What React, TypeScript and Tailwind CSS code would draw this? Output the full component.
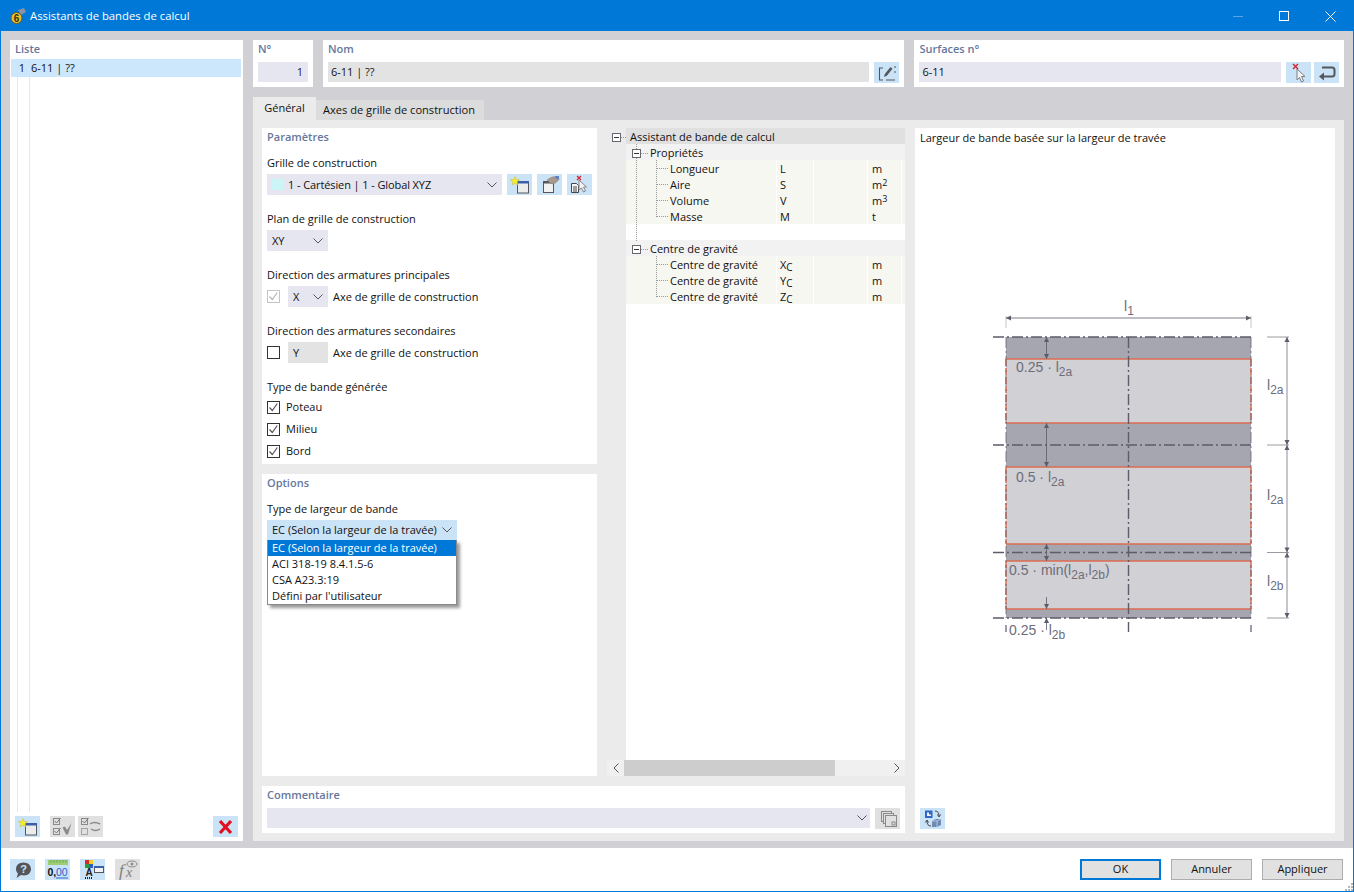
import React from "react";

const NewIcon = () => (
  <svg width="22" height="20" viewBox="0 0 22 20">
    <rect x="8.500" y="6.500" width="11" height="11.500" fill="#ececec" stroke="#55565c" />
    <rect x="8" y="6" width="12" height="2.500" fill="#3d5fa8" />
    <path d="M6 1.500l1.300 3 3.200.2-2.400 2.100.8 3.200L6 8.300 3.100 10l.8-3.200-2.400-2.100 3.200-.2z" fill="#f5ee2c" stroke="#c9b92a" strokeWidth=".5" />
  </svg>
);
const EditWinIcon = () => (
  <svg width="22" height="20" viewBox="0 0 22 20">
    <rect x="4.500" y="6.500" width="10" height="11" fill="#f2f2f2" stroke="#55565c" />
    <rect x="4" y="6" width="11" height="2.500" fill="#55565c" />
    <path d="M8 5l5-3 6-.5 1 3-3 3-3 1.500-3-1z" fill="#a89a8a" stroke="#7d7268" strokeWidth=".5" />
    <path d="M16 1h4v3h-3z" fill="#5d82c7" />
  </svg>
);
const PickDocIcon = () => (
  <svg width="22" height="20" viewBox="0 0 22 20">
    <path d="M2.500 8.500h5l2 2v7h-7z" fill="#f6f6f6" stroke="#44454a" />
    <path d="M4 12h4M4 14h4M4 16h4" stroke="#44454a" />
    <path d="M10 5v10l2.500-2 2 4 2-1-2-4h3z" fill="#f3f3f3" stroke="#85868c" />
    <path d="M8 1l4 4M12 1L8 5" stroke="#d8232e" strokeWidth="1.300" />
  </svg>
);
const PickIcon = () => (
  <svg width="22" height="20" viewBox="0 0 22 20">
    <path d="M9 6v11l2.500-2.500 2 4.500 2-1-2-4.500h3.500z" fill="#f5f5f5" stroke="#7c7d84" />
    <path d="M5 1l5 5M10 1L5 6" stroke="#d8232e" strokeWidth="1.400" />
  </svg>
);
const ReturnIcon = () => (
  <svg width="22" height="20" viewBox="0 0 22 20">
    <path d="M6 4.500h10c1.500 0 2.500 1 2.500 2.500v4c0 1.500-1 2.500-2.500 2.500H7" fill="none" stroke="#55565c" strokeWidth="2" />
    <path d="M8 9.500l-5 4 5 4z" fill="#55565c" />
  </svg>
);
const PencilBoxIcon = () => (
  <svg width="22" height="20" viewBox="0 0 22 20">
    <path d="M7 5H3.500v12H7M10 17h9" fill="none" stroke="#55565c" strokeWidth="1.100" />
    <path d="M8 14l.8-3 5.700-7 2 1.700-5.700 7z" fill="#55565c" />
    <path d="M19 3v2M19 8v2" stroke="#55565c" />
  </svg>
);
const CheckAllIcon = () => (
  <svg width="22" height="20" viewBox="0 0 22 20">
    <rect x="1.500" y="1.500" width="6" height="6" fill="#e0e0e0" stroke="#8a8a8a" />
    <rect x="1.500" y="11.500" width="6" height="6" fill="#e0e0e0" stroke="#8a8a8a" />
    <path d="M2.500 4l2 2 4-5M2.500 14l2 2 4-5" fill="none" stroke="#777" />
    <path d="M10.500 10.500l2.500-1 2 3.500 4.500-7-3.500 11.500h-2z" fill="#8a8a8a" />
  </svg>
);
const CheckSwapIcon = () => (
  <svg width="22" height="20" viewBox="0 0 22 20">
    <rect x="1.500" y="1.500" width="6" height="6" fill="#e0e0e0" stroke="#8a8a8a" />
    <rect x="1.500" y="11.500" width="6" height="6" fill="#e0e0e0" stroke="#a5a5a5" />
    <path d="M2.500 4l2 2 4-5" fill="none" stroke="#777" />
    <path d="M10 7c3-2 6-2 10 0M20 12c-3 2-6 2-9 0" fill="none" stroke="#8a8a8a" strokeWidth="1.500" />
  </svg>
);
const XIcon = () => (
  <svg width="22" height="20" viewBox="0 0 22 20">
    <path d="M5 4l11 12M16 4L5 16" stroke="#e01020" strokeWidth="3.200" />
  </svg>
);
const HelpIcon = () => (
  <svg width="22" height="20" viewBox="0 0 22 20">
    <path d="M11.500 2.500c4.500 0 7.500 2.800 7.500 6.500s-3 6.500-7 6.500c-1 0-2-.2-3-.5l-4.500 3 1.500-4.500C4.500 12 4 10.500 4 9c0-3.700 3-6.500 7.500-6.500z" fill="#55565c" />
    <text x="11.500" y="13" textAnchor="middle" fontSize="11" fontWeight="700" fill="#cbe3f7" fontFamily="Liberation Sans, sans-serif">?</text>
  </svg>
);
const UnitsIcon = () => (
  <svg width="24" height="21" viewBox="0 0 24 21">
    <rect x="2" y="1" width="20" height="5" fill="#9ccf73" />
    <path d="M5 1v2.500M8 1v2.500M11 1v2.500M14 1v2.500M17 1v2.500M20 1v2.500" stroke="#6ea04c" />
    <text x="1.500" y="17" fontSize="10.500" fontWeight="700" fill="#111" fontFamily="Liberation Sans, sans-serif">0,</text>
    <text x="10" y="17" fontSize="10.500" fill="#2a62c9" fontFamily="Liberation Sans, sans-serif">00</text>
    <path d="M10 19h12" stroke="#2a62c9" />
  </svg>
);
const ColorsIcon = () => (
  <svg width="24" height="21" viewBox="0 0 24 21">
    <rect x="4" y="1" width="4" height="4" fill="#d62a2a" />
    <rect x="8" y="1" width="4" height="4" fill="#f0d020" />
    <rect x="4" y="5" width="4" height="4" fill="#2d9a3c" />
    <rect x="8" y="5" width="4" height="4" fill="#2a62c9" />
    <text x="4.500" y="17" fontSize="10" fontWeight="700" fill="#222" fontFamily="Liberation Sans, sans-serif">A</text>
    <path d="M4 19h1M6 19h1M8 19h1M10 19h1" stroke="#222" strokeWidth="2" />
    <rect x="13.500" y="7.500" width="9" height="6" fill="#f2f2f2" stroke="#55565c" />
    <rect x="13" y="7" width="10" height="2" fill="#3d5fa8" />
  </svg>
);
const FxIcon = () => (
  <svg width="24" height="21" viewBox="0 0 24 21">
    <text x="3" y="17" fontSize="17" fontStyle="italic" fill="#7e7e7e" fontFamily="Liberation Serif, serif">f</text>
    <text x="10" y="18" fontSize="14" fontStyle="italic" fill="#7e7e7e" fontFamily="Liberation Serif, serif">x</text>
    <ellipse cx="16" cy="5" rx="5" ry="3" fill="none" stroke="#8e8e8e" />
    <circle cx="16" cy="5" r="1.500" fill="#8e8e8e" />
  </svg>
);
const CopyIcon = () => (
  <svg width="22" height="20" viewBox="0 0 22 20">
    <rect x="4.500" y="2.500" width="10" height="10" fill="none" stroke="#8a8a8a" />
    <rect x="6.500" y="4.500" width="10" height="10" fill="#e0e0e0" stroke="#8a8a8a" />
    <rect x="8.500" y="6.500" width="11" height="11" fill="#e0e0e0" stroke="#8a8a8a" />
    <rect x="15" y="13" width="3" height="3" fill="none" stroke="#8a8a8a" />
  </svg>
);
const SyncIcon = () => (
  <svg width="22" height="20" viewBox="0 0 22 20">
    <rect x="3" y="1.500" width="7.500" height="7.500" fill="#2f66c8" />
    <path d="M5 3.500v3.500h4V5.500H7v-2z" fill="#f4f4f4" />
    <path d="M13 2c3 0 4 2 4 5M15.500 5.500L17 8l1.700-2.500M9 17c-3 0-4-2-4-5M3.300 13.500L5 11l1.500 2.500" fill="none" stroke="#44454a" />
    <path d="M10 12l4-2h5v6l-4 2h-5z" fill="#6f8bb5" />
    <path d="M10 12h5v6M15 12l4-2" fill="none" stroke="#dce8f5" strokeWidth=".6" />
  </svg>
);

const Chevron = ({ className = "" }: { className?: string }) => (
  <svg width="10" height="6" viewBox="0 0 10 6" className={className}>
    <path d="M.5.5L5 5 9.500.5" fill="none" stroke="#55565c" />
  </svg>
);

const IconBtn = ({ children, gray = false }: { children: React.ReactNode; gray?: boolean }) => (
  <div className={`flex h-[21px] w-[25px] shrink-0 items-center justify-center overflow-hidden ${gray ? "bg-[#e0e0e0]" : "bg-[#cbe3f7]"}`}>
    {children}
  </div>
);

const Heading = ({ children }: { children: React.ReactNode }) => (
  <div className="h-[18px] text-[11px] font-semibold leading-[18px] text-[#67779c]">{children}</div>
);

const Label = ({ children }: { children: React.ReactNode }) => (
  <div className="h-[16px] leading-[16px]">{children}</div>
);

const Combo = ({ text, className = "" }: { text: string; className?: string }) => (
  <div className={`flex h-[21px] items-center justify-between bg-[#e6e6f0] pl-[5px] pr-[5px] ${className}`}>
    <span className="pt-px">{text}</span>
    <Chevron />
  </div>
);

const Check = ({ checked = false, disabled = false }: { checked?: boolean; disabled?: boolean }) => (
  <div className={`flex h-[13px] w-[13px] shrink-0 items-center justify-center border bg-white ${disabled ? "border-[#c4c4c4]" : "border-[#333333]"}`}>
    {checked && (
      <svg width="11" height="11" viewBox="0 0 11 11">
        <path d="M1.500 5.500l2.800 3 5-7" fill="none" stroke={disabled ? "#b5b5b5" : "#555"} strokeWidth="1.200" />
      </svg>
    )}
  </div>
);

const Section = ({ label, children }: { label: string; children: React.ReactNode }) => (
  <div className="flex h-[56px] flex-col gap-[3px]">
    <Label>{label}</Label>
    {children}
  </div>
);

const Sub = ({ a, b }: { a: string; b: string }) => (
  <span>
    {a}
    <span className="relative top-[2px] text-[10px]">{b}</span>
  </span>
);

const Row = ({ name, sym, unit, sup }: { name: string; sym: React.ReactNode; unit: string; sup?: string }) => (
  <div className="relative flex h-[16px] bg-[#f7f7f2] leading-[18px]">
    <div className="absolute left-[31px] top-[8px] w-[11px] border-t border-dotted border-[#999]" />
    <div className="w-[151px] border-r border-white pl-[44px]">{name}</div>
    <div className="w-[37px] border-r border-white pl-[3px]">{sym}</div>
    <div className="w-[54px] border-r border-white" />
    <div className="w-[34px] border-r border-white pl-[4px]">
      {unit}
      {sup && <sup className="top-[-3px] text-[9px]">{sup}</sup>}
    </div>
  </div>
);

const TreeMinus = () => (
  <svg width="9" height="9" viewBox="0 0 9 9" className="block shrink-0">
    <rect x=".5" y=".5" width="8" height="8" fill="#fff" stroke="#66666e" />
    <path d="M2 4.500h5" stroke="#333" />
  </svg>
);

const Diagram = () => {
  const ink = "#5c5c6a";
  const txt = "#6d6d7a";
  const red = "#dc6c50";
  const fam = "Liberation Sans, sans-serif";
  const axis = "11 3 2 3";
  const arrowV = (x: number, y: number, up: boolean) => (
    <path d={up ? `M${x - 2.500} ${y + 5}L${x} ${y}L${x + 2.500} ${y + 5}z` : `M${x - 2.500} ${y - 5}L${x} ${y}L${x + 2.500} ${y - 5}z`} fill={ink} />
  );
  const label = (x: number, y: number, a: string, b: string) => (
    <text x={x} y={y} fontSize="14" fill={txt} fontFamily={fam}>
      {a}
      <tspan dy="4" fontSize="12">{b}</tspan>
    </text>
  );
  return (
    <svg width="420" height="360" viewBox="915 290 420 360" className="block">
      <rect x="1006" y="337" width="245" height="281" fill="#a6a6b0" />
      <rect x="1006" y="359" width="245" height="64" fill="#d1d0d5" />
      <rect x="1006" y="467" width="245" height="77" fill="#d1d0d5" />
      <rect x="1006" y="561" width="245" height="48" fill="#d1d0d5" />
      <path d="M1006 359h245M1006 423h245M1006 467h245M1006 544h245M1006 561h245M1006 609h245" stroke={red} strokeWidth="1.300" />
      <path d="M1006 359V423M1251 359V423M1006 467V544M1251 467V544M1006 561V609M1251 561V609" stroke={red} strokeWidth="1.500" strokeDasharray="7 2" />
      <path d="M1006 337V618M1251 337V618" stroke={ink} strokeWidth="1" strokeDasharray="11 3 2 3" opacity=".75" />
      <path d="M993 337H1251M993 445H1251M993 552.500H1251M993 618H1251" stroke={ink} strokeWidth="1.400" strokeDasharray={axis} />
      <path d="M1128.500 337V632" stroke={ink} strokeWidth="1.400" strokeDasharray={axis} />
      <path d="M1006 625V632M1251 625V632" stroke={ink} strokeWidth="1.200" />
      <path d="M1006 316V328M1251 316V328" stroke="#c6c6c6" strokeWidth="1" />
      <path d="M1006 318H1251" stroke={ink} strokeWidth=".8" />
      <path d="M1006 318l5-2.500v5zM1251 318l-5-2.500v5z" fill={ink} />
      <path d="M1267 337h22M1267 445h22M1267 552.500h22M1267 618h22" stroke="#9a9aa4" />
      <path d="M1287 337V618" stroke="#8c8c98" />
      {arrowV(1287, 337, true)}
      {arrowV(1287, 445, false)}
      {arrowV(1287, 445, true)}
      {arrowV(1287, 552.500, false)}
      {arrowV(1287, 552.500, true)}
      {arrowV(1287, 618, false)}
      <path d="M1046.500 337V359M1046.500 423V467M1046.500 544V561M1046.500 597V609M1046.500 618V630" stroke={ink} strokeWidth=".8" />
      {arrowV(1046.500, 337, true)}
      {arrowV(1046.500, 359, false)}
      {arrowV(1046.500, 423, true)}
      {arrowV(1046.500, 467, false)}
      {arrowV(1046.500, 544, true)}
      {arrowV(1046.500, 561, false)}
      {arrowV(1046.500, 609, false)}
      {arrowV(1046.500, 618, true)}
      {label(1124, 311, "l", "1")}
      {label(1016, 372, "0.25 · l", "2a")}
      {label(1016, 482, "0.5 · l", "2a")}
      <text x="1009" y="575" fontSize="14" fill={txt} fontFamily={fam}>
        0.5 · min(l<tspan dy="4" fontSize="12">2a</tspan><tspan dy="-4">,l</tspan><tspan dy="4" fontSize="12">2b</tspan><tspan dy="-4">)</tspan>
      </text>
      {label(1009, 635, "0.25 · l", "2b")}
      {label(1267, 390, "l", "2a")}
      {label(1267, 500, "l", "2a")}
      {label(1267, 586, "l", "2b")}
    </svg>
  );
};

export default function App() {
  return (
    <div className="flex h-[892px] w-[1354px] flex-col overflow-hidden border border-[#0078d7] bg-white text-[11px] text-[#111111] [font-family:'Open_Sans','Noto_Sans',sans-serif]">
      {/* title bar */}
      <div className="flex h-[30px] shrink-0 items-center bg-[#0078d7] text-white">
        <svg width="18" height="18" viewBox="0 0 18 18" className="ml-[8px]">
          <path d="M9 3l6-2 2 4-5 3z" fill="#8b93a8" />
          <circle cx="7.500" cy="11" r="5.500" fill="#e9c22b" stroke="#6a5a20" />
          <text x="7.500" y="14.500" textAnchor="middle" fontSize="10" fontWeight="700" fill="#3a3210" fontFamily="Liberation Sans, sans-serif">6</text>
        </svg>
        <span className="ml-[3px] text-[11.3px]">Assistants de bandes de calcul</span>
        <div className="ml-auto flex items-center">
          <div className="flex w-[46px] justify-center">
            <div className="h-px w-[10px] bg-[#5aa5e4]" />
          </div>
          <div className="flex w-[46px] justify-center">
            <div className="h-[10px] w-[10px] border border-white" />
          </div>
          <div className="flex w-[46px] justify-center">
            <svg width="11" height="11" viewBox="0 0 11 11">
              <path d="M.5.5l10 10M10.500.5l-10 10" stroke="#fff" />
            </svg>
          </div>
        </div>
      </div>

      {/* body */}
      <div className="flex min-h-0 flex-1 gap-[10px] bg-[#d1d0d5] pb-[7px] pl-[9px] pr-[9px] pt-[9px]">
        {/* list */}
        <div className="flex w-[233px] shrink-0 flex-col bg-white">
          <div className="px-[5px]"><Heading>Liste</Heading></div>
          <div className="relative mx-px flex-1">
            <div className="absolute bottom-[4px] left-[6px] top-0 w-[1px] bg-[#e8e8e8]" />
            <div className="absolute bottom-[4px] left-[18px] top-0 w-[1px] bg-[#e8e8e8]" />
            <div className="relative mt-px flex h-[18px] w-[230px] items-center bg-[#cce6fc]">
              <span className="w-[14px] text-right">1</span>
              <span className="ml-[6px]">6-11 | ??</span>
            </div>
          </div>
          <div className="flex h-[25px] shrink-0 items-start px-[5px]">
            <IconBtn><NewIcon /></IconBtn>
            <div className="ml-[10px]"><IconBtn gray><CheckAllIcon /></IconBtn></div>
            <div className="ml-[3px]"><IconBtn gray><CheckSwapIcon /></IconBtn></div>
            <div className="ml-auto"><IconBtn><XIcon /></IconBtn></div>
          </div>
        </div>

        {/* right */}
        <div className="flex min-w-0 flex-1 flex-col">
          <div className="flex h-[47px] shrink-0 gap-[10px]">
            <div className="w-[60px] bg-white px-[5px]">
              <Heading>N°</Heading>
              <div className="mt-[4px] h-[20px] bg-[#e6e6f0] pr-[5px] text-right leading-[20px] text-[#2a1050]">1</div>
            </div>
            <div className="w-[582px] bg-white px-[5px]">
              <Heading>Nom</Heading>
              <div className="mt-[4px] flex gap-[5px]">
                <div className="h-[20px] flex-1 bg-[#e3e3e3] pl-[3px] leading-[20px]">6-11 | ??</div>
                <IconBtn><PencilBoxIcon /></IconBtn>
              </div>
            </div>
            <div className="w-[430px] bg-white px-[5px]">
              <Heading>Surfaces n°</Heading>
              <div className="mt-[4px] flex">
                <div className="h-[20px] flex-1 bg-[#e6e6f0] pl-[3px] leading-[20px]">6-11</div>
                <div className="ml-[5px]"><IconBtn><PickIcon /></IconBtn></div>
                <div className="ml-[3px]"><IconBtn><ReturnIcon /></IconBtn></div>
              </div>
            </div>
          </div>

          {/* tabs */}
          <div className="mt-[10px] flex h-[23px] shrink-0 items-end">
            <div className="flex h-[23px] w-[63px] items-center justify-center bg-[#ebebeb]">Général</div>
            <div className="flex h-[20px] w-[168px] items-center justify-center bg-[#dcdcdc] pr-[2px] text-[11.1px]">Axes de grille de construction</div>
          </div>

          <div className="flex min-h-0 flex-1 gap-[10px] bg-[#ebebeb] px-[9px] py-[8px]">
            <div className="flex w-[643px] shrink-0 flex-col gap-[10px]">
              <div className="flex min-h-0 flex-1 gap-[10px]">
                {/* left column */}
                <div className="flex w-[335px] shrink-0 flex-col gap-[10px]">
                  <div className="h-[336px] bg-white px-[5px]">
                    <Heading>Paramètres</Heading>
                    <div className="mt-[9px]">
                      <Section label="Grille de construction">
                        <div className="flex gap-[5px]">
                          <div className="flex h-[21px] w-[235px] items-center bg-[#e6e6f0] pl-[5px] pr-[5px]">
                            <div className="h-[11px] w-[11px] bg-[#ccf5f8]" />
                            <span className="ml-[5px] pt-px tracking-[-0.1px]">1 - Cartésien | 1 - Global XYZ</span>
                            <Chevron className="ml-auto" />
                          </div>
                          <IconBtn><NewIcon /></IconBtn>
                          <IconBtn><EditWinIcon /></IconBtn>
                          <IconBtn><PickDocIcon /></IconBtn>
                        </div>
                      </Section>
                      <Section label="Plan de grille de construction">
                        <Combo text="XY" className="w-[61px]" />
                      </Section>
                      <Section label="Direction des armatures principales">
                        <div className="flex items-center">
                          <Check checked disabled />
                          <Combo text="X" className="ml-[8px] w-[40px]" />
                          <span className="ml-[5px] pt-px">Axe de grille de construction</span>
                        </div>
                      </Section>
                      <Section label="Direction des armatures secondaires">
                        <div className="flex items-center">
                          <Check />
                          <div className="ml-[8px] flex h-[21px] w-[40px] items-center bg-[#e3e3e3] pl-[5px] pt-px">Y</div>
                          <span className="ml-[5px] pt-px">Axe de grille de construction</span>
                        </div>
                      </Section>
                      <Label>Type de bande générée</Label>
                      <div className="mt-[1px] flex flex-col">
                        {["Poteau", "Milieu", "Bord"].map((t) => (
                          <div key={t} className="flex h-[22px] items-center gap-[6px]">
                            <Check checked />
                            <span>{t}</span>
                          </div>
                        ))}
                      </div>
                    </div>
                  </div>
                  <div className="relative min-h-0 flex-1 bg-white px-[5px]">
                    <Heading>Options</Heading>
                    <div className="mt-[9px]"><Label>Type de largeur de bande</Label></div>
                    <div className="mt-[3px] flex h-[20px] w-[190px] items-center justify-between bg-[#cbe3f7] px-[5px]">
                      <span className="pt-px">EC (Selon la largeur de la travée)</span>
                      <Chevron />
                    </div>
                    <div className="absolute left-[5px] top-[66px] w-[190px] border border-t-0 border-[#8a8a8a] bg-white shadow-[3px_3px_3px_rgba(0,0,0,0.4)]">
                      <div className="h-[16px] bg-[#0078d7] pl-[4px] leading-[16px] text-white">EC (Selon la largeur de la travée)</div>
                      <div className="h-[16px] pl-[4px] leading-[16px]">ACI 318-19 8.4.1.5-6</div>
                      <div className="h-[16px] pl-[4px] leading-[16px]">CSA A23.3:19</div>
                      <div className="h-[16px] pl-[4px] leading-[16px]">Défini par l'utilisateur</div>
                    </div>
                  </div>
                </div>

                {/* tree */}
                <div className="flex min-w-0 flex-1 flex-col">
                  <div className="flex min-h-0 flex-1">
                    <div className="relative w-[19px] shrink-0">
                      <div className="absolute left-[5px] top-[5px]"><TreeMinus /></div>
                      <div className="absolute left-[14px] top-[9px] w-[5px] border-t border-dotted border-[#999]" />
                    </div>
                    <div className="relative min-w-0 flex-1 bg-white">
                      <div className="h-[16px] bg-[#e0e0e0] pl-[4px] leading-[18px]">Assistant de bande de calcul</div>
                      <div className="h-[16px] bg-[#f2f2f2] pl-[24px] leading-[18px]">Propriétés</div>
                      <div className="absolute left-[15px] top-[25px] z-10 w-[7px] border-t border-dotted border-[#999]" />
                      <Row name="Longueur" sym="L" unit="m" />
                      <Row name="Aire" sym="S" unit="m" sup="2" />
                      <Row name="Volume" sym="V" unit="m" sup="3" />
                      <Row name="Masse" sym="M" unit="t" />
                      <div className="h-[16px]" />
                      <div className="h-[16px] bg-[#f2f2f2] pl-[24px] leading-[18px]">Centre de gravité</div>
                      <div className="absolute left-[15px] top-[121px] z-10 w-[7px] border-t border-dotted border-[#999]" />
                      <Row name="Centre de gravité" sym={<Sub a="X" b="C" />} unit="m" />
                      <Row name="Centre de gravité" sym={<Sub a="Y" b="C" />} unit="m" />
                      <Row name="Centre de gravité" sym={<Sub a="Z" b="C" />} unit="m" />
                      <div className="absolute left-[10px] top-[16px] z-10 h-[97px] border-l border-dotted border-[#999]" />
                      <div className="absolute left-[30px] top-[32px] z-10 h-[57px] border-l border-dotted border-[#999]" />
                      <div className="absolute left-[30px] top-[128px] z-10 h-[41px] border-l border-dotted border-[#999]" />
                      <div className="absolute left-[6px] top-[21px] z-20"><TreeMinus /></div>
                      <div className="absolute left-[6px] top-[117px] z-20"><TreeMinus /></div>
                    </div>
                  </div>
                  <div className="flex h-[16px] shrink-0 items-center bg-[#f0f0f0]">
                    <div className="flex w-[17px] justify-center"><Chevron className="rotate-90" /></div>
                    <div className="h-[16px] w-[211px] bg-[#cdcdcd]" />
                    <div className="ml-auto flex w-[17px] justify-center"><Chevron className="-rotate-90" /></div>
                  </div>
                </div>
              </div>

              <div className="h-[47px] shrink-0 bg-white px-[5px]">
                <Heading>Commentaire</Heading>
                <div className="mt-[4px] flex gap-[5px]">
                  <div className="flex h-[20px] flex-1 items-center justify-end bg-[#e6e6f0] pr-[3px]"><Chevron /></div>
                  <IconBtn gray><CopyIcon /></IconBtn>
                </div>
              </div>
            </div>

            {/* diagram panel */}
            <div className="flex w-[420px] shrink-0 flex-col bg-white">
              <div className="h-[20px] pl-[5px] leading-[20px]">Largeur de bande basée sur la largeur de travée</div>
              <div className="mt-[142px]"><Diagram /></div>
              <div className="mt-auto pb-[4px] pl-[5px]"><IconBtn><SyncIcon /></IconBtn></div>
            </div>
          </div>
        </div>
      </div>

      {/* footer */}
      <div className="relative flex h-[43px] shrink-0 items-center pl-[9px] pr-[10px]">
        <div className="flex gap-[10px]">
          <IconBtn><HelpIcon /></IconBtn>
          <IconBtn><UnitsIcon /></IconBtn>
          <IconBtn><ColorsIcon /></IconBtn>
          <IconBtn gray><FxIcon /></IconBtn>
        </div>
        <div className="ml-auto flex gap-[10px]">
          <div className="flex h-[21px] w-[81px] items-center justify-center border-2 border-[#0078d7] bg-[#e1e1e1]">OK</div>
          <div className="flex h-[21px] w-[81px] items-center justify-center border border-[#adadad] bg-[#e1e1e1]">Annuler</div>
          <div className="flex h-[21px] w-[81px] items-center justify-center border border-[#adadad] bg-[#e1e1e1]">Appliquer</div>
        </div>
        <svg width="9" height="9" viewBox="0 0 9 9" className="absolute bottom-0 right-0">
          <path d="M7 1h2v2H7zM4 4h2v2H4zM7 4h2v2H7zM1 7h2v2H1zM4 7h2v2H4zM7 7h2v2H7z" fill="#b5b5b5" />
        </svg>
      </div>
    </div>
  );
}
